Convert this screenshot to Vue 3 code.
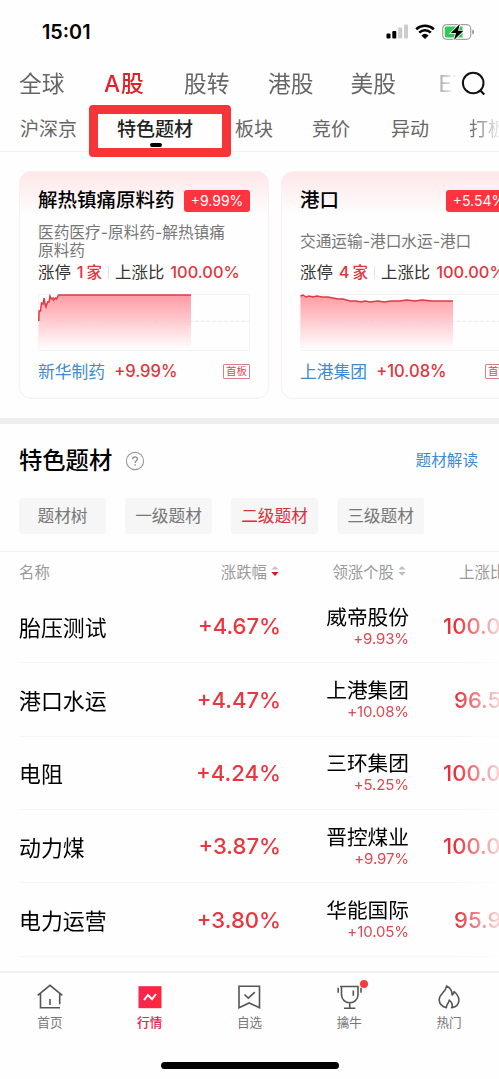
<script setup>
const markets = ['全球', 'A股', '股转', '港股', '美股', 'ETF']
const sections = ['沪深京', '特色题材', '板块', '竞价', '异动', '打板']

const cards = [
  {
    name: '解热镇痛原料药',
    change: '+9.99%',
    path: '医药医疗-原料药-解热镇痛原料药',
    count: '1',
    ratio: '100.00%',
    stock: '新华制药',
    stockChange: '+9.99%',
    line: '0.8,27 1,17 2.5,17 3.5,9 5,10 6.2,4 7,10 8,13 9.5,8 11,8 12,2 13.5,5 15,4 15.5,6 17.5,4 18.5,5 20.5,1 153,1',
  },
  {
    name: '港口',
    change: '+5.54%',
    path: '交通运输-港口水运-港口',
    count: '4',
    ratio: '100.00%',
    stock: '上港集团',
    stockChange: '+10.08%',
    line: '0.5,2 3,1 6,3 9,2 13,3 17,2 22,3 28,3 33,4 38,5 43,5 50,7 56,7 61,8 65,7 70,8 78,7 84,8 91,7 99,7 107,6 115,7 122,6 132,7 143,7 153,7',
  },
]

const levels = ['题材树', '一级题材', '二级题材', '三级题材']

const rows = [
  { name: '胎压测试', change: '+4.67%', stock: '威帝股份', stockChange: '+9.93%', ratio: '100.00%' },
  { name: '港口水运', change: '+4.47%', stock: '上港集团', stockChange: '+10.08%', ratio: '96.55%' },
  { name: '电阻', change: '+4.24%', stock: '三环集团', stockChange: '+5.25%', ratio: '100.00%' },
  { name: '动力煤', change: '+3.87%', stock: '晋控煤业', stockChange: '+9.97%', ratio: '100.00%' },
  { name: '电力运营', change: '+3.80%', stock: '华能国际', stockChange: '+10.05%', ratio: '95.92%' },
]
</script>

<template>
  <div class="screen">
    <header class="status">
      <span class="time">15:01</span>
      <div class="status-icons">
        <svg width="23" height="16" viewBox="0 0 23 16">
          <rect x="0.5" y="9.5" width="4" height="5" rx="1" fill="#000" />
          <rect x="6.3" y="7" width="4" height="7.5" rx="1" fill="#000" />
          <rect x="12.2" y="3.5" width="4" height="11" rx="1" fill="#ccc" />
          <rect x="18" y="0.5" width="4" height="14" rx="1" fill="#ccc" />
        </svg>
        <svg class="wifi" width="20" height="16" viewBox="0 0 20 16">
          <path d="M1.2 5.2A13 13 0 0 1 18.8 5.2M4.2 8.6A8.5 8.5 0 0 1 15.8 8.6" fill="none" stroke="#000" stroke-width="2.6" />
          <path d="M6.4 11.4A5.4 5.4 0 0 1 13.6 11.4L10 15Z" fill="#000" />
        </svg>
        <svg class="battery" width="33" height="18" viewBox="0 0 33 18">
          <rect x="0.7" y="1.7" width="28" height="14.6" rx="4" fill="#fff" stroke="#a2a2a2" stroke-width="1.2" />
          <path d="M5 3.5H20.5V14.5H5A2.2 2.2 0 0 1 2.7 12.3V5.7A2.2 2.2 0 0 1 5 3.5Z" fill="#34c759" />
          <path d="M30.2 6.5Q32.2 7.3 32.2 9T30.2 11.5Z" fill="#999" />
          <path d="M17.8 1L8.8 10H14L12 17L21.4 7.8H16Z" fill="#000" stroke="#fff" stroke-width="1.6" paint-order="stroke" />
        </svg>
      </div>
    </header>

    <nav class="markets">
      <div class="market-list">
        <span v-for="(m, i) in markets" :key="m" :class="{ on: i === 1 }">{{ m }}</span>
      </div>
      <svg class="search" width="26" height="26" viewBox="0 0 26 26">
        <circle cx="12.2" cy="12" r="10.3" fill="none" stroke="#111" stroke-width="2" />
        <path d="M18.8 19L23.3 23.5" stroke="#111" stroke-width="2.2" />
      </svg>
    </nav>

    <nav class="sections">
      <span v-for="(s, i) in sections" :key="s" :class="{ on: i === 1 }">{{ s }}</span>
      <div class="marker"></div>
    </nav>

    <section class="cards">
      <article v-for="(c, i) in cards" :key="c.name" class="card">
        <div class="card-head">
          <h3>{{ c.name }}</h3>
          <span class="badge">{{ c.change }}</span>
        </div>
        <div class="path"><p>{{ c.path }}</p></div>
        <div class="stat">
          <span>涨停</span>
          <b>{{ c.count }}<i>家</i></b>
          <span class="bar"></span>
          <span>上涨比</span>
          <b class="ratio">{{ c.ratio }}</b>
        </div>
        <svg class="chart" width="212" height="57" viewBox="0 0 212 57">
          <defs>
            <linearGradient :id="'fill' + i" x1="0" y1="0" x2="0" y2="1">
              <stop offset="0" stop-color="#ff9ba4" />
              <stop offset="1" stop-color="#ffffff" />
            </linearGradient>
          </defs>
          <rect x="0.5" y="0.5" width="211" height="56" fill="none" stroke="#f3f3f3" />
          <polygon :points="c.line + ' 153,56 0.5,56'" :fill="`url(#fill${i})`" />
          <path d="M18 27.3H211" stroke="#d9cdcf" stroke-opacity=".55" stroke-width="1" stroke-dasharray="3.2 2.6" />
          <polyline :points="c.line" fill="none" stroke="#dc3b45" stroke-width="1.5" />
        </svg>
        <div class="stock">
          <span class="stock-name">{{ c.stock }}</span>
          <span class="stock-change">{{ c.stockChange }}</span>
          <span class="tag">首板</span>
        </div>
      </article>
    </section>

    <section class="topics">
      <div class="topic-head">
        <h2>特色题材</h2>
        <svg width="20" height="20" viewBox="0 0 20 20">
          <circle cx="10" cy="10" r="8.6" fill="none" stroke="#999" stroke-width="1.1" />
          <path d="M7.6 8.2C7.6 5.1 12.6 5.2 12.5 8.1C12.4 9.9 10.1 9.8 10.1 12M10.1 13.2V14.7" fill="none" stroke="#888" stroke-width="1.3" />
        </svg>
        <a>题材解读</a>
      </div>
      <div class="levels">
        <span v-for="(l, i) in levels" :key="l" :class="{ on: i === 2 }">{{ l }}</span>
      </div>
      <div class="grid thead">
        <span>名称</span>
        <span class="th">涨跌幅
          <svg width="8" height="12" viewBox="0 0 8 12"><path d="M0.5 4.6L4 1L7.5 4.6Z" fill="#c4c4c4" /><path d="M0.3 7L4 11L7.7 7Z" fill="#d71920" /></svg>
        </span>
        <span class="th">领涨个股
          <svg width="8" height="12" viewBox="0 0 8 12"><path d="M0.5 4.6L4 1L7.5 4.6Z" fill="#bbb" /><path d="M0.5 7L4 10.8L7.5 7Z" fill="#bbb" /></svg>
        </span>
        <span class="last">上涨比</span>
      </div>
      <div class="table">
        <div v-for="r in rows" :key="r.name" class="grid row">
          <span class="name">{{ r.name }}</span>
          <span class="change">{{ r.change }}</span>
          <span class="leader"><em>{{ r.stock }}</em><small>{{ r.stockChange }}</small></span>
          <span class="rise" :class="{ short: r.ratio.length < 7 }">{{ r.ratio }}</span>
        </div>
      </div>
    </section>

    <footer class="tabbar">
      <div class="tab">
        <svg width="28" height="28" viewBox="0 0 28 28" fill="none" stroke="#555" stroke-width="1.6">
          <path d="M1.7 12.3L14 2.4L26.3 12.3M4.5 10.5V24.8H24M23.7 10.5V21.3M14 16V22" />
        </svg>
        <span>首页</span>
      </div>
      <div class="tab on">
        <svg width="28" height="28" viewBox="0 0 28 28">
          <defs><linearGradient id="hot"><stop stop-color="#f72450" /><stop offset="1" stop-color="#ff2739" /></linearGradient></defs>
          <rect x="2.5" y="3.2" width="23" height="22" fill="url(#hot)" />
          <path d="M8 17.2L12 12L16 16.3L20 11" fill="none" stroke="#fff" stroke-width="2" />
        </svg>
        <span>行情</span>
      </div>
      <div class="tab">
        <svg width="28" height="28" viewBox="0 0 28 28" fill="none" stroke="#555" stroke-width="1.6">
          <path d="M4 3.3H24.5V24.8L14.2 20L4 24.8ZM9.4 11.5L13.3 15.2L19.8 9.2" />
        </svg>
        <span>自选</span>
      </div>
      <div class="tab">
        <svg width="28" height="28" viewBox="0 0 28 28" fill="none" stroke="#555" stroke-width="1.6">
          <path d="M5 3.5H23V11.5C23 22.5 6.5 22.5 6.5 11.5V3.5M14.7 19.8V25.2M9 25.2H20.3M18.3 7.5V12.8M3.2 4.7V9.8M26 4.7V9.8" />
        </svg>
        <i class="dot"></i>
        <span>擒牛</span>
      </div>
      <div class="tab">
        <svg width="28" height="28" viewBox="0 0 28 28" fill="none" stroke="#555" stroke-width="1.6" stroke-linejoin="round">
          <path d="M11.3 24.8C6.7 23.6 4.2 20.7 4.2 16.6C4.2 10.8 10.8 9.5 11.6 3C15.2 4.7 17.2 7.5 17.1 12C18.4 11.2 19 10 19.1 8.5C22.3 11.3 23.9 14 23.9 17C23.9 20.9 21.5 23.8 16.7 24.8C18.2 21.8 16.7 19.2 14.2 17C14.2 20.2 11.2 21 11.3 24.8Z" />
        </svg>
        <span>热门</span>
      </div>
    </footer>
    <div class="home"></div>
  </div>
</template>

<style>
body {
  background: #fff;
}
</style>

<style scoped>
.screen {
  display: flex;
  flex-direction: column;
  box-sizing: border-box;
  width: 499px;
  height: 1079px;
  overflow: hidden;
  background: #fefefe;
  font-family: Inter, "Noto Sans CJK SC", sans-serif;
  color: #111;
  white-space: nowrap;
}
h2, h3, p { margin: 0; }
i, em { font-style: normal; }
svg { display: block; flex: none; }

.status {
  height: 64px;
  flex: none;
  display: flex;
  align-items: center;
  justify-content: space-between;
  box-sizing: border-box;
  padding: 0 24px 0 42px;
}
.time { font-size: 19.8px; font-weight: 600; color: #000; }
.status-icons { display: flex; align-items: center; }
.wifi { margin-left: 6px; }
.battery { margin-left: 7px; }

.markets { height: 41px; flex: none; display: flex; align-items: center; padding-left: 19px; }
.market-list {
  display: grid;
  grid-template-columns: 85px 80px 84px 82.5px 88px 20px;
  width: 438px;
  overflow: hidden;
  font-size: 22.7px;
  line-height: 38px;
  height: 40px;
  color: #666;
  mask-image: linear-gradient(90deg, #000 405px, transparent 438px);
}
.market-list .on { color: #e0202a; font-weight: 500; letter-spacing: 1px; }
.search { margin-left: 4px; margin-top: -1px; }

.sections {
  position: relative;
  height: 46px;
  flex: none;
  display: grid;
  grid-template-columns: 97px 118px 77px 79px 78px 30px;
  padding-left: 20px;
  border-bottom: 1px solid #f0f0f0;
  font-size: 19px;
  line-height: 50px;
  color: #666;
}
.sections .on { color: #222; font-weight: 500; }
.sections span:last-of-type { overflow: hidden; mask-image: linear-gradient(90deg, #000, transparent 34px); }
.sections .on::after {
  content: "";
  position: absolute;
  left: 150px;
  top: 38px;
  width: 12px;
  height: 4px;
  border-radius: 2px;
  background: #000;
}
.marker {
  position: absolute;
  left: 89px;
  top: 0;
  box-sizing: border-box;
  width: 142px;
  height: 52px;
  border: 9px solid #f53537;
  border-radius: 4px;
}

.cards { display: flex; gap: 12px; padding: 19px 0 19px 19px; flex: none; overflow: hidden; border-bottom: 6px solid #eee; }
.card {
  flex: none;
  box-sizing: border-box;
  width: 250px;
  height: 228px;
  padding: 17px 18px 0;
  border: 1px solid #faeeef;
  border-radius: 12px;
  background: linear-gradient(#fee7e8, #fefefe 44px);
}
.card-head { display: flex; align-items: center; justify-content: space-between; height: 23px; }
.card-head h3 { font-size: 19.5px; font-weight: 500; line-height: 22px; height: 24px; color: #000; }
.badge {
  width: 66px;
  height: 22px;
  border-radius: 3px;
  background: #fd3440;
  color: #fff;
  font-size: 14px;
  line-height: 21px;
  text-align: center;
}
.path { height: 48px; margin-top: 6px; display: flex; align-items: center; }
.path p { width: 200px; white-space: normal; font-size: 15.7px; line-height: 18px; color: #777; }
.stat { display: flex; align-items: center; height: 18px; margin-top: -3px; font-size: 16.4px; line-height: 18px; color: #333; }
.stat b { margin-left: 6px; font-weight: 500; color: #df3740; }
.stat i { margin-left: 3px; font-size: 15.5px; }
.stat .bar { width: 1px; height: 13px; background: #e3e3e3; margin: 0 6px; }
.stat .ratio { margin-left: 6px; }
.chart { margin-top: 13px; }
.stock { display: flex; align-items: center; height: 40px; font-size: 16.8px; }
.stock-name { color: #3e8bd2; }
.stock-change { margin-left: 9px; color: #dc3740; font-weight: 500; font-size: 16.6px; }
.tag {
  box-sizing: border-box;
  margin-left: auto;
  width: 27px;
  height: 15px;
  border: 1px solid #d98085;
  border-radius: 1px;
  color: #cf5058;
  font-size: 10.5px;
  line-height: 13px;
  text-align: center;
}

.topics { flex: none; }
.topic-head { display: flex; align-items: center; height: 74px; padding: 0 21px 0 19px; }
.topic-head h2 { font-size: 23.3px; font-weight: 500; color: #000; line-height: 30px; }
.topic-head svg { margin-left: 13px; }
.topic-head a { margin-left: auto; font-size: 15.6px; line-height: 20px; padding-bottom: 1px; color: #3e8bd2; }
.levels { display: flex; gap: 19px; padding: 0 19px 17px; }
.levels span {
  width: 87px;
  height: 36px;
  border-radius: 3px;
  background: #f6f6f6;
  color: #777;
  font-size: 16.7px;
  line-height: 36px;
  text-align: center;
}
.levels .on { color: #dc2f3a; }
.grid {
  display: grid;
  grid-template-columns: 120px 142px 128px 110px;
  align-items: center;
  margin-left: 19px;
}
.thead {
  height: 38px;
  margin-left: 0;
  padding-left: 19px;
  border-top: 1px solid #f3f3f3;
  font-size: 15.4px;
  color: #999;
}
.th { display: flex; align-items: center; justify-content: flex-end; gap: 4px; }
.thead .th:nth-child(2) { padding-right: 2px; }
.thead .th:nth-child(3) { padding-right: 3px; }
.last { padding-left: 50px; }
.row { height: 73.35px; box-sizing: border-box; border-bottom: 1px solid #f5f5f5; }
.table { overflow: hidden; mask-image: linear-gradient(90deg, #000 455px, rgba(0, 0, 0, 0.2) 499px); }
.name { font-size: 21.9px; color: #000; }
.change { text-align: right; font-size: 22.1px; font-weight: 500; color: #ea363e; }
.leader { display: flex; flex-direction: column; align-items: flex-end; }
.leader em { font-size: 20.7px; line-height: 24px; color: #000; }
.leader small { font-size: 15px; line-height: 17px; letter-spacing: -0.1px; color: #dd4950; }
.rise { padding-left: 34px; font-size: 22.1px; font-weight: 500; color: #e5323a; }
.rise.short { padding-left: 45px; }

.tabbar {
  display: flex;
  flex: none;
  height: 74px;
  margin-top: 14px;
  border-top: 2px solid #f1f1f1;
}
.tab { position: relative; flex: 1; display: flex; flex-direction: column; align-items: center; padding-top: 10px; font-size: 12.6px; line-height: 20px; color: #777; }
.tab span { margin-top: 2px; }
.tab.on { color: #e02450; font-weight: 500; }
.dot { position: absolute; left: 61px; top: 7px; width: 8px; height: 8px; border-radius: 50%; background: #f53b42; }
.home { flex: none; align-self: center; width: 178px; height: 7px; margin-top: 15px; border-radius: 4px; background: #000; }
</style>
